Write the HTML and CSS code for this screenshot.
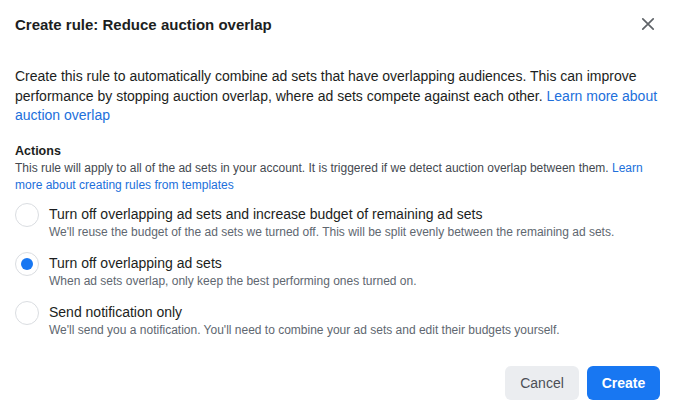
FILE: index.html
```html
<!DOCTYPE html>
<html>
<head>
<meta charset="utf-8">
<link rel="stylesheet" href="styles.css">
</head>
<body>
<div class="dialog">
  <div class="header">
    <h1 class="title">Create rule: Reduce auction overlap</h1>
    <button class="close" aria-label="Close">
      <svg width="14" height="14" viewBox="0 0 14 14"><path d="M1.8 1.8 L12.2 12.2 M12.2 1.8 L1.8 12.2" stroke="#5f6368" stroke-width="1.7" stroke-linecap="round"/></svg>
    </button>
  </div>
  <p class="intro">Create this rule to automatically combine ad sets that have overlapping audiences. This can improve performance by stopping auction overlap, where ad sets compete against each other. <a href="#">Learn more about auction overlap</a></p>
  <div class="actions">
    <h2 class="section">Actions</h2>
    <p class="note">This rule will apply to all of the ad sets in your account. It is triggered if we detect auction overlap between them. <a href="#">Learn more about creating rules from templates</a></p>
    <div class="options">
      <label class="option">
        <span class="radio"></span>
        <span class="opt-text">
          <span class="opt-title">Turn off overlapping ad sets and increase budget of remaining ad sets</span>
          <span class="opt-desc">We'll reuse the budget of the ad sets we turned off. This will be split evenly between the remaining ad sets.</span>
        </span>
      </label>
      <label class="option">
        <span class="radio checked"></span>
        <span class="opt-text">
          <span class="opt-title">Turn off overlapping ad sets</span>
          <span class="opt-desc">When ad sets overlap, only keep the best performing ones turned on.</span>
        </span>
      </label>
      <label class="option">
        <span class="radio"></span>
        <span class="opt-text">
          <span class="opt-title">Send notification only</span>
          <span class="opt-desc">We'll send you a notification. You'll need to combine your ad sets and edit their budgets yourself.</span>
        </span>
      </label>
    </div>
  </div>
  <div class="footer">
    <button class="btn btn-secondary">Cancel</button>
    <button class="btn btn-primary">Create</button>
  </div>
</div>
</body>
</html>
```
FILE: styles.css
```css
* { box-sizing: border-box; }
html, body { margin: 0; padding: 0; background: #fff; }
body {
  font-family: "Liberation Sans", Arial, sans-serif;
  color: #1c1e21;
  width: 675px;
  height: 407px;
  overflow: hidden;
}
.dialog {
  display: flex;
  flex-direction: column;
  height: 407px;
  padding: 0 15px;
}
.header {
  display: flex;
  align-items: center;
  justify-content: space-between;
  height: 48px;
}
.title {
  margin: 0;
  font-size: 15px;
  font-weight: bold;
  color: #1c1e21;
}
.close {
  border: none;
  background: none;
  padding: 0;
  width: 24px;
  height: 24px;
  display: flex;
  align-items: center;
  justify-content: center;
}
a { color: #216fdb; text-decoration: none; }
.intro {
  margin: 19px 0 0 0;
  font-size: 14px;
  line-height: 19.5px;
  color: #1c1e21;
}
.actions { margin-top: 17px; }
.section {
  margin: 0;
  font-size: 12.5px;
  font-weight: bold;
  line-height: 17px;
}
.note {
  margin: 0;
  font-size: 12px;
  line-height: 17px;
  color: #444950;
}
.options {
  display: flex;
  flex-direction: column;
  gap: 13px;
  margin-top: 11px;
}
.option {
  display: flex;
  align-items: flex-start;
  gap: 10px;
}
.radio {
  flex: none;
  width: 24px;
  height: 24px;
  margin-top: -2px;
  border-radius: 50%;
  border: 1px solid #dadde1;
  background: #fff;
  display: flex;
  align-items: center;
  justify-content: center;
}
.radio.checked::after {
  content: "";
  width: 12px;
  height: 12px;
  border-radius: 50%;
  background: #1877f2;
}
.opt-text { display: flex; flex-direction: column; }
.opt-title {
  font-size: 14px;
  line-height: 19px;
  color: #1c1e21;
}
.opt-desc {
  font-size: 12px;
  line-height: 17px;
  color: #606770;
}
.footer {
  margin-top: auto;
  display: flex;
  justify-content: flex-end;
  gap: 8px;
  padding-bottom: 7px;
}
.btn {
  height: 34px;
  border: none;
  border-radius: 6px;
  font-family: "Liberation Sans", Arial, sans-serif;
  font-size: 14px;
  padding: 0;
}
.btn-secondary {
  width: 74px;
  background: #ebedf0;
  color: #4b4f56;
}
.btn-primary {
  width: 73px;
  background: #1877f2;
  color: #fff;
  font-weight: bold;
}
```
